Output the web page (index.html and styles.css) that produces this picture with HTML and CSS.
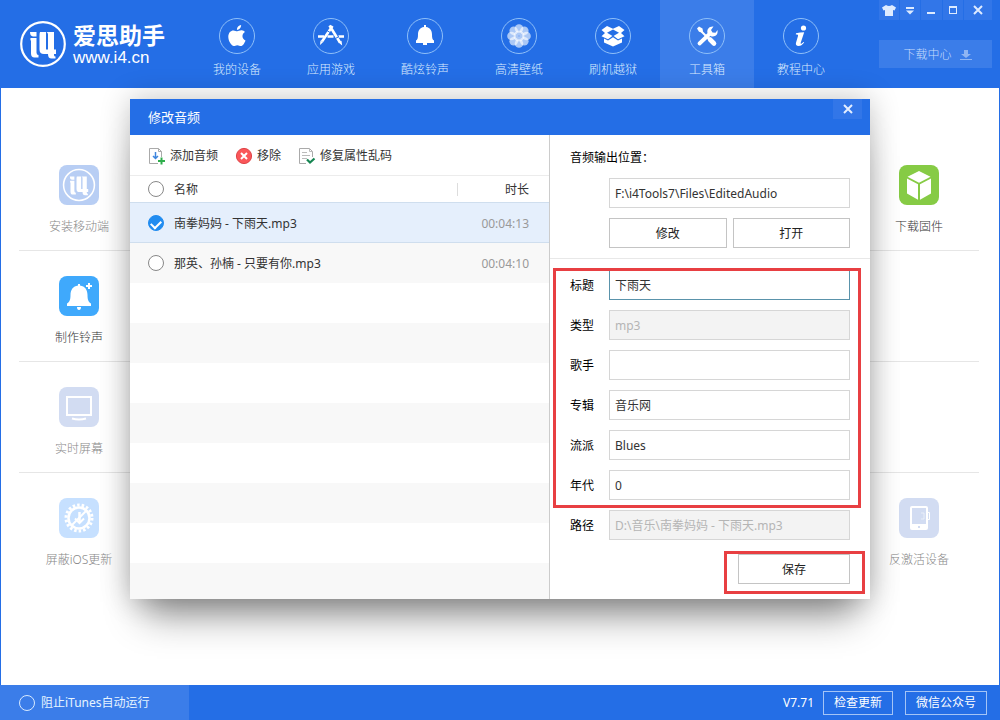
FILE: index.html
```html
<!DOCTYPE html>
<html lang="zh-CN">
<head>
<meta charset="utf-8">
<title>爱思助手</title>
<link rel="stylesheet" href="styles.css">
</head>
<body>
<svg class="defs" aria-hidden="true">
  <symbol id="mark" viewBox="0 0 48 48">
    <circle cx="24" cy="24" r="21.8" fill="none" stroke="currentColor" stroke-width="2.2"/>
    <g fill="currentColor">
      <path d="M11 12h6.500v4.500H14q-3-.5-3-4.500z"/>
      <path d="M11.500 18h6v14.500q0 2.500 2 2.500v2.500h-4q-3.500 0-3.500-4V21q-1-1-.5-3z"/>
      <path d="M21 12h6v17.500h2V14.500q0-2-1.500-2.500h7.500v17.500h2v4.500h-2v1q0 1.500 1.500 1.500v2h-4q-3.500 0-3.500-4.500h-4q-4.500 0-4.500-4.500V16q0-3 .5-4z"/>
    </g>
  </symbol>
</svg>
<div class="app">
  <header class="header">
    <div class="brand">
      <svg class="brand-mark"><use href="#mark"/></svg>
      <div class="brand-text">
        <strong class="brand-name">爱思助手</strong>
        <span class="brand-url">www.i4.cn</span>
      </div>
    </div>
    <nav class="nav">
      <a class="nav-item" href="#"><svg class="nav-icon" viewBox="0 0 36 36"><circle class="ring" cx="18" cy="18" r="17.500"/><path fill="#fff" d="M18.200 13.300c1.200 0 2.600-1.200 4.500-1 1.400.1 2.500.7 3.200 1.700-3.600 2.300-3 6.900.6 8.400-.8 2.300-2.600 5.600-4.600 5.600-1.300 0-1.900-.8-3.600-.8s-2.300.8-3.500.8c-2.500 0-5.500-5.200-5.500-9.200 0-4.200 2.600-6.400 5.100-6.400 1.700 0 2.800.9 3.800.9zM17.900 12c-.1-2.600 1.900-4.600 4.200-4.900.2 2.600-2 4.800-4.200 4.900z"/></svg>我的设备</a>
      <a class="nav-item" href="#"><svg class="nav-icon" viewBox="0 0 36 36"><circle class="ring" cx="18" cy="18" r="17.500"/><g stroke="#fff" fill="none"><path stroke-width="2.600" d="M19.500 8 9 23.500M16.500 7.500 27 24.500"/><path stroke-width="2.600" d="M5 18.500H11M14.500 18.500h6M25.500 18.500H31"/></g><path fill="#fff" d="m7.500 22.500 2.500 1.700-3 2.800zM25.500 24.500l3-1.800.7 4.800z"/><path stroke="#246ee6" d="m14 12.500 3 2M22.500 20.500l3.500-2"/></svg>应用游戏</a>
      <a class="nav-item" href="#"><svg class="nav-icon" viewBox="0 0 36 36"><circle class="ring" cx="18" cy="18" r="17.500"/><path fill="#fff" d="M17 7h2v2c4.500.6 6 4 6 7.500 0 3.500.4 5 2 6V25h-7v2h-4v-2H9v-2.500c1.600-1 2-2.500 2-6 0-3.500 1.500-6.900 6-7.500z"/></svg>酷炫铃声</a>
      <a class="nav-item" href="#"><svg class="nav-icon" viewBox="0 0 36 36"><circle class="ring" cx="18" cy="18" r="17.500"/><g fill="#fff" fill-opacity=".62"><circle cx="18" cy="10.500" r="4.300"/><circle cx="23.300" cy="12.700" r="4.300"/><circle cx="25.500" cy="18" r="4.300"/><circle cx="23.300" cy="23.300" r="4.300"/><circle cx="18" cy="25.500" r="4.300"/><circle cx="12.700" cy="23.300" r="4.300"/><circle cx="10.500" cy="18" r="4.300"/><circle cx="12.700" cy="12.700" r="4.300"/><circle cx="18" cy="18" r="5.500"/></g><circle cx="18" cy="18" r="1" fill="#8fb5f3"/></svg>高清壁纸</a>
      <a class="nav-item" href="#"><svg class="nav-icon" viewBox="0 0 36 36"><circle class="ring" cx="18" cy="18" r="17.500"/><path fill="#fff" d="m12 8 6 2.700L24 8l5.500 4-3.500 3 3.500 3.200-6.500 3-5-3.700-5 3.700-6.500-3L10 15l-3.500-3z"/><path fill="#246ee6" d="m18 11.500 6 3.300-6 3.400-6-3.400z"/><path fill="#fff" d="m9 20.500 4 2 5-3.300 5 3.300 4-2v4L18 28.500l-9-4z"/></svg>刷机越狱</a>
      <a class="nav-item active" href="#" aria-current="page"><svg class="nav-icon" viewBox="0 0 36 36"><circle class="ring" cx="18" cy="18" r="17.500"/><g stroke="#fff" fill="none" stroke-linecap="round"><path stroke-width="4.600" d="m21 21.500 4 4"/><path stroke-width="2" d="m12 13 8 8"/><path stroke-width="3.800" d="m10.500 25.500 10.500-10"/></g><path fill="#fff" d="m8 10.500 2-2 3.500 2 .5 3-1 1-3-.8zM24.500 8.500 22 12l1.500 2.500 3 .3 2-2.800c.8 5-2.500 7.300-6.500 6.200L18.500 15c-.9-4 2-7 6-6.500z"/></svg>工具箱</a>
      <a class="nav-item" href="#"><svg class="nav-icon" viewBox="0 0 36 36"><circle class="ring" cx="18" cy="18" r="17.500"/><circle cx="20.500" cy="10" r="2.600" fill="#fff"/><path fill="#fff" d="M13 15.300q4-.8 8.200-1l-3.500 10.500c-.4 1.500 1 1 2.700-.9l.8.700c-2 2.500-3.500 3.400-5.600 3.400-2.300 0-3.200-1.200-2.600-3.200l2-6.800c.3-1.300-.3-1.600-2.200-1.600z"/></svg>教程中心</a>
    </nav>
    <div class="header-side">
      <div class="window-buttons">
        <button type="button" aria-label="皮肤"><svg width="14" height="12" viewBox="0 0 14 12"><path fill="#deebff" d="M4 1q3 2 6 0l4 2.500-1.500 3L11 6v6H3V6l-1.500.5L0 3.500z"/></svg></button>
        <button type="button" aria-label="菜单"><svg width="10" height="10" viewBox="0 0 10 10"><path fill="#deebff" d="M1 2h8v2H1zM1 5.500h8L5 9.500z"/></svg></button>
        <button type="button" aria-label="最小化"><svg width="10" height="10" viewBox="0 0 10 10"><path fill="#deebff" d="M1 7h8v2H1z"/></svg></button>
        <button type="button" aria-label="最大化"><svg width="10" height="10" viewBox="0 0 10 10"><path fill="#deebff" fill-rule="evenodd" d="M1 1h8v8H1zM2 3v5h6V3z"/></svg></button>
        <button type="button" aria-label="关闭"><svg width="10" height="10" viewBox="0 0 10 10"><path stroke="#deebff" stroke-width="2" d="m1 1 8 8M9 1 1 9"/></svg></button>
      </div>
      <button type="button" class="download-center">下载中心<svg width="12" height="12" viewBox="0 0 12 12"><path fill="#8fb5f3" d="M4 1h4v4h3L6 9 1 5h3zM0 10h12v1H0z"/></svg></button>
    </div>
  </header>

  <main class="main">
    <div class="tools">
      <div class="tool-row">
        <a class="tool muted" href="#"><svg class="tool-icon" viewBox="0 0 40 40"><rect width="40" height="40" rx="8" fill="#b8cef4"/><svg x="3" y="3" width="34" height="34" color="#fff"><use href="#mark"/></svg></svg>安装移动端</a>
        <a class="tool last" href="#"><svg class="tool-icon" viewBox="0 0 40 40"><rect width="40" height="40" rx="8" fill="#86cb45"/><path fill="#fff" d="m20 6 11.500 5.800L20 17.800 8.500 11.800zM8 13.500l11 5.700v15.500L8 28.500zM32 13.500l-11 5.700v15.500l11-6.200z"/></svg>下载固件</a>
      </div>
      <div class="tool-row">
        <a class="tool" href="#"><svg class="tool-icon" viewBox="0 0 40 40"><rect width="40" height="40" rx="8" fill="#3fa9fc"/><path fill="#fff" d="M19 8h2v1.500c5 .7 7.500 4.300 7.500 9.500 0 5 1 7 3.500 8.500V30H8v-2.500c2.500-1.500 3.500-3.500 3.500-8.500 0-5.200 2.500-8.800 7.500-9.500zM18 31h4q0 3-2 3t-2-3zM29 7h2v2h2v2h-2v2h-2v-2h-2V9h2z"/></svg>制作铃声</a>
      </div>
      <div class="tool-row">
        <a class="tool muted" href="#"><svg class="tool-icon" viewBox="0 0 40 40"><rect width="40" height="40" rx="8" fill="#d2dcf2"/><path fill="none" stroke="#fff" stroke-width="2" d="M8 10h24v18H8zM13 31.500q7 2 14 0"/></svg>实时屏幕</a>
      </div>
      <div class="tool-row">
        <a class="tool muted" href="#"><svg class="tool-icon" viewBox="0 0 40 40"><rect width="40" height="40" rx="8" fill="#c6e0ff"/><g fill="none" stroke="#fff"><circle cx="20" cy="20" r="10.500" stroke-width="2.500"/><circle cx="20" cy="20" r="13" stroke-width="3" stroke-dasharray="2.500 2.038"/><path stroke-width="2" d="m12 28 16-16"/><path stroke-width="2.500" d="M20.500 14v10"/><path stroke-width="2" d="m16 20.500 4.500 4.500 4.500-4.500"/></g></svg>屏蔽iOS更新</a>
        <a class="tool muted last" href="#"><svg class="tool-icon" viewBox="0 0 40 40"><rect width="40" height="40" rx="8" fill="#d2dcf2"/><path fill="#fff" fill-rule="evenodd" d="M13 8h14q2 0 2 2v20q0 2-2 2H13q-2 0-2-2V10q0-2 2-2zm0 2v16h14V10zm6 18h2v2h-2z"/><path fill="none" stroke="#fff" stroke-opacity=".5" d="M22 15h3v6h-3"/><path fill="none" stroke="#fff" d="M29 14.500h1.500v7H29"/></svg>反激活设备</a>
      </div>
    </div>

    <section class="dialog" role="dialog" aria-labelledby="dialog-title">
      <div class="dialog-bar">
        <h1 id="dialog-title">修改音频</h1>
        <button type="button" class="dialog-close" aria-label="关闭"><svg width="10" height="10" viewBox="0 0 10 10"><path stroke="#e4eeff" stroke-width="2" d="m1 1 8 8M9 1 1 9"/></svg></button>
      </div>
      <div class="dialog-body">
        <div class="list-pane">
          <div class="toolbar">
            <button type="button"><svg width="18" height="18" viewBox="0 0 18 18"><path fill="#fff" stroke="#aaa" d="M10 16.500H1.500v-15h9l3 3V10"/><path fill="none" stroke="#aaa" d="M10.500 1.500v3h3"/><path fill="none" stroke="#3d85dd" stroke-width="1.500" d="M7.500 5v6M5 9l2.500 2.500L10 9"/><path stroke="#2fae4c" stroke-width="2" d="M10 14h7M13.500 10.500v7"/></svg>添加音频</button>
            <button type="button"><svg width="18" height="18" viewBox="0 0 18 18"><circle cx="9" cy="9" r="7.600" fill="#fa5659" stroke="#df4548"/><path stroke="#fff" stroke-width="2" d="m6 6 6 6M12 6l-6 6"/></svg>移除</button>
            <button type="button"><svg width="18" height="18" viewBox="0 0 18 18"><path fill="#fff" stroke="#aaa" d="M8 16.500H1.500v-15h10l3 3V10"/><path fill="none" stroke="#bbb" d="M11.500 1.500v3h3M4 5.500h5M4 8.500h8M4 11.500h5"/><path fill="none" stroke="#168552" stroke-width="2.200" d="m9 12.500 3 3 4.500-4"/></svg>修复属性乱码</button>
          </div>
          <table class="tracks">
            <thead>
              <tr><th class="pick"><input type="checkbox" aria-label="全选"></th><th class="name">名称</th><th class="time">时长</th></tr>
            </thead>
            <tbody>
              <tr class="selected"><td class="pick"><input type="checkbox" id="t1" checked></td><td class="name"><label for="t1">南拳妈妈 - 下雨天.mp3</label></td><td class="time">00:04:13</td></tr>
              <tr><td class="pick"><input type="checkbox" id="t2"></td><td class="name"><label for="t2">那英、孙楠 - 只要有你.mp3</label></td><td class="time">00:04:10</td></tr>
            </tbody>
          </table>
          <div class="stripes"></div>
        </div>
        <form class="edit-pane">
          <div class="output">
            <label for="out">音频输出位置：</label>
            <div class="output-controls">
              <input type="text" id="out" value="F:\i4Tools7\Files\EditedAudio">
              <div class="button-pair">
                <button type="button" class="btn">修改</button>
                <button type="button" class="btn">打开</button>
              </div>
            </div>
          </div>
          <div class="fields">
            <div class="field-group marked">
              <div class="field"><label for="f1">标题</label><input type="text" id="f1" class="current" value="下雨天"></div>
              <div class="field"><label for="f2">类型</label><input type="text" id="f2" value="mp3" disabled></div>
              <div class="field"><label for="f3">歌手</label><input type="text" id="f3"></div>
              <div class="field"><label for="f4">专辑</label><input type="text" id="f4" value="音乐网"></div>
              <div class="field"><label for="f5">流派</label><input type="text" id="f5" value="Blues"></div>
              <div class="field"><label for="f6">年代</label><input type="text" id="f6" value="0"></div>
            </div>
            <div class="field"><label for="f7">路径</label><input type="text" id="f7" value="D:\音乐\南拳妈妈 - 下雨天.mp3" disabled></div>
            <div class="save marked"><button type="button" class="btn">保存</button></div>
          </div>
        </form>
      </div>
    </section>
  </main>

  <footer class="footer">
    <label class="block-itunes"><input type="checkbox">阻止iTunes自动运行</label>
    <div class="footer-side">
      <span>V7.71</span>
      <button type="button" class="update">检查更新</button>
      <button type="button" class="wechat">微信公众号</button>
    </div>
  </footer>
</div>
</body>
</html>
```
FILE: styles.css
```css
* {
  box-sizing: border-box;
}

body {
  margin: 0;
  font: 12px/20px "Noto Sans", "Noto Sans CJK SC", sans-serif;
  color: #333;
  background: #fff;
}

button,
input {
  font: inherit;
  color: inherit;
}

button {
  padding: 0;
  border: 0;
  background: none;
}

a {
  color: inherit;
  text-decoration: none;
}

svg {
  display: block;
}

.defs {
  display: none;
}

.app {
  min-height: 100vh;
  display: flex;
  flex-direction: column;
}

/* Header */
.header {
  display: flex;
  height: 88px;
  background: #246ee6;
  color: #fff;
}

.brand {
  display: flex;
  align-items: center;
  gap: 6px;
  width: 190px;
  padding-left: 19px;
}

.brand-mark {
  width: 48px;
  height: 48px;
}

.brand-text {
  display: flex;
  flex-direction: column;
}

.brand-name {
  font-size: 23px;
  line-height: 28px;
}

.brand-url {
  font: 17px/18px "Liberation Sans", sans-serif;
}

.nav {
  display: flex;
}

.nav-item {
  display: flex;
  flex-direction: column;
  align-items: center;
  gap: 6px;
  width: 94px;
  padding-top: 18px;
  color: #dcedff;
  font-weight: 300;
}

.nav-item.active {
  background: #3b7de9;
}

.nav-icon {
  width: 36px;
  height: 36px;
}

.ring {
  fill: none;
  stroke: #8fbff8;
}

.header-side {
  display: flex;
  flex-direction: column;
  gap: 20px;
  width: 113px;
  margin: 0 8px 0 auto;
}

.window-buttons {
  display: flex;
  gap: 1px;
  height: 20px;
}

.window-buttons button {
  flex: 20;
  display: grid;
  place-items: center;
  background: #3276e8;
}

.window-buttons button:last-child {
  flex: 28;
}

.download-center {
  display: flex;
  align-items: center;
  justify-content: center;
  gap: 8px;
  height: 28px;
  padding: 2px 0 0 4px;
  background: #3b7de9;
  color: #c6dcfc;
  font-weight: 300;
}

/* Tools behind the dialog */
.main {
  flex: 1;
  position: relative;
  border: solid #246ee6;
  border-width: 0 1px;
}

.tools {
  padding: 52px 20px 0 18px;
}

.tool-row {
  display: grid;
  grid-template-columns: repeat(8, 1fr);
  height: 111px;
  padding-top: 25px;
  border-bottom: 1px solid #e6e6e6;
}

.tool-row:last-child {
  border: 0;
}

.tool {
  display: flex;
  flex-direction: column;
  align-items: center;
  gap: 12px;
  color: #333;
  font-weight: 300;
}

.tool.muted {
  color: #888;
}

.tool.last {
  grid-column: 8;
}

.tool-icon {
  width: 40px;
  height: 40px;
}

/* Dialog */
.dialog {
  position: absolute;
  inset: 11px 129px auto;
  background: #fff;
  box-shadow: 0 0 28px rgba(0, 0, 0, .24), 0 30px 36px -14px rgba(0, 0, 0, .42);
}

.dialog-bar {
  display: flex;
  justify-content: space-between;
  align-items: center;
  height: 36px;
  padding: 0 8px 0 18px;
  background: #246ee6;
  color: #fff;
}

.dialog-bar h1 {
  margin: 0;
  font-size: 13px;
  font-weight: 400;
}

.dialog-close {
  display: grid;
  place-items: center;
  align-self: flex-start;
  width: 29px;
  height: 20px;
  background: #3276e8;
}

.dialog-body {
  display: grid;
  grid-template-columns: 1fr 321px;
}

.list-pane {
  display: flex;
  flex-direction: column;
}

.toolbar {
  display: flex;
  align-items: center;
  gap: 17px;
  height: 40px;
  padding: 2px 0 0 18px;
}

.toolbar button {
  display: flex;
  align-items: center;
  gap: 4px;
}

.tracks {
  width: 100%;
  border-collapse: collapse;
}

.tracks th,
.tracks td {
  height: 40px;
  padding: 2px 0 0;
  text-align: left;
  font-weight: 400;
}

.tracks th {
  height: 27px;
  border-top: 1px solid #ececec;
}

.tracks tr {
  background: #f8f8f8;
}

.tracks thead tr {
  background: #fff;
}

.tracks .selected {
  background: #e5effc;
  border: solid #cfdeee;
  border-width: 1px 0;
}

.tracks .pick {
  width: 44px;
  padding: 0 0 0 18px;
}

.tracks .time {
  width: 92px;
  padding-right: 20px;
  text-align: right;
}

.tracks th.time {
  background: linear-gradient(#ddd, #ddd) left center / 1px 13px no-repeat;
}

.tracks td.time {
  color: #999;
}

input[type="checkbox"] {
  appearance: none;
  display: block;
  flex: none;
  width: 16px;
  height: 16px;
  margin: 0;
  border: 1px solid #888;
  border-radius: 50%;
  background: #fff;
}

input[type="checkbox"]:checked {
  display: grid;
  justify-items: center;
  padding-top: 4px;
  border-color: #218cf0;
  background: #218cf0;
}

input[type="checkbox"]:checked::before {
  content: "";
  width: 8px;
  height: 5px;
  border: solid #fff;
  border-width: 0 0 2px 2px;
  transform: rotate(-45deg);
}

.stripes {
  flex: 1;
  background: repeating-linear-gradient(#fff 0 40px, #f8f8f8 40px 80px);
}

.edit-pane {
  border-left: 1px solid #ccc;
  color: #000;
}

.output {
  padding: 13px 20px 10px;
  border-bottom: 1px solid #e8e8e8;
}

.output-controls {
  display: grid;
  gap: 10px;
  margin: 10px 0 0 39px;
}

.output label {
  display: block;
}

.button-pair {
  display: grid;
  grid-template-columns: 1fr 1fr;
  gap: 6px;
}

input[type="text"] {
  width: 100%;
  height: 30px;
  padding: 0 5px;
  border: 1px solid #d6d6d6;
  border-radius: 0;
  background: #fff;
  color: #333;
}

input[type="text"].current {
  border-color: #5a93ab;
}

input[type="text"]:disabled {
  background: #f3f3f3;
  color: #b5b5b5;
}

.btn {
  height: 30px;
  padding-top: 2px;
  border: 1px solid #c4c4c4;
  background: #fff;
  color: #222;
}

.fields {
  display: grid;
  gap: 10px;
  padding: 11px 20px 15px;
}

.field-group {
  display: grid;
  gap: 10px;
}

.field {
  display: grid;
  grid-template-columns: 39px 1fr;
  align-items: center;
}

.field label {
  padding-top: 2px;
}

.save {
  display: grid;
  justify-self: end;
  width: 112px;
  margin-top: 4px;
}

/* Red frames that call out the areas to edit */
.marked {
  position: relative;
}

.marked::after {
  content: "";
  position: absolute;
  inset: -2px -11px -8px -17px;
  border: 3px solid #e83f42;
  pointer-events: none;
}

.save.marked::after {
  inset: -3px -15px -10px -14px;
}

/* Footer */
.footer {
  display: flex;
  justify-content: space-between;
  height: 35px;
  background: #246ee6;
  color: #fff;
}

.block-itunes {
  display: flex;
  align-items: center;
  gap: 6px;
  width: 189px;
  padding-left: 19px;
  background: #3b7de9;
  color: #e6f4ff;
}

.block-itunes input[type="checkbox"] {
  border-color: #d8eaff;
  background: none;
}

.footer-side {
  display: flex;
  align-items: center;
  padding-right: 13px;
}

.footer-side button {
  height: 24px;
  border: 1px solid #a4c4f6;
}

.update {
  width: 70px;
  margin: 0 12px 0 9px;
}

.wechat {
  width: 82px;
}
```
